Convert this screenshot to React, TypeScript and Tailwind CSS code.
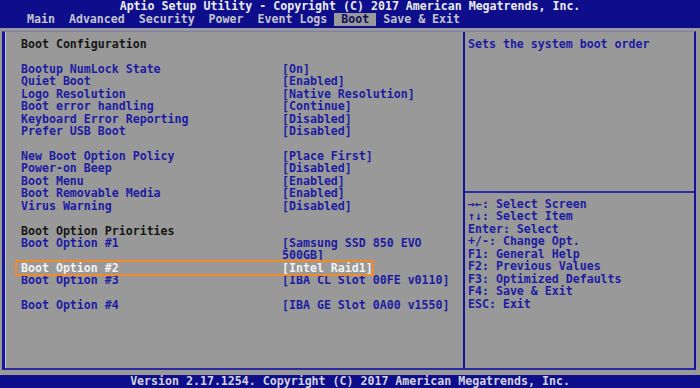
import React from "react";

type Row = {
  label?: string;
  value?: string | string[];
  head?: boolean;
  active?: boolean;
};

const rows: Row[] = [
  { label: "Boot Configuration", head: true },
  {},
  { label: "Bootup NumLock State", value: "[On]" },
  { label: "Quiet Boot", value: "[Enabled]" },
  { label: "Logo Resolution", value: "[Native Resolution]" },
  { label: "Boot error handling", value: "[Continue]" },
  { label: "Keyboard Error Reporting", value: "[Disabled]" },
  { label: "Prefer USB Boot", value: "[Disabled]" },
  {},
  { label: "New Boot Option Policy", value: "[Place First]" },
  { label: "Power-on Beep", value: "[Disabled]" },
  { label: "Boot Menu", value: "[Enabled]" },
  { label: "Boot Removable Media", value: "[Enabled]" },
  { label: "Virus Warning", value: "[Disabled]" },
  {},
  { label: "Boot Option Priorities", head: true },
  { label: "Boot Option #1", value: ["[Samsung SSD 850 EVO", "500GB]"] },
  { label: "Boot Option #2", value: "[Intel Raid1]", active: true },
  { label: "Boot Option #3", value: "[IBA CL Slot 00FE v0110]" },
  {},
  { label: "Boot Option #4", value: "[IBA GE Slot 0A00 v1550]" },
];

const tabs = ["Main", "Advanced", "Security", "Power", "Event Logs", "Boot", "Save & Exit"];

const keys = [
  "\u2192\u2190: Select Screen",
  "\u2191\u2193: Select Item",
  "Enter: Select",
  "+/-: Change Opt.",
  "F1: General Help",
  "F2: Previous Values",
  "F3: Optimized Defaults",
  "F4: Save & Exit",
  "ESC: Exit",
];

function SettingRow({ row }: { row: Row }) {
  if (!row.label) return <div className="h-[12.45px]" />;
  if (row.head) {
    return <div className="h-[12.45px] whitespace-pre text-[#161616]">{row.label}</div>;
  }
  const lines = Array.isArray(row.value) ? row.value : [row.value];
  if (row.active) {
    return (
      <div className="-ml-1 flex h-[12.45px] w-[355px] whitespace-pre pl-1 text-[#f2f2f2] outline-2 outline-[#f28a2c]">
        <span className="w-[261px] shrink-0">{row.label}</span>
        <span>{lines[0]}</span>
      </div>
    );
  }
  return (
    <div className="flex whitespace-pre text-[#1c1ca2]">
      <span className="h-[12.45px] w-[261px] shrink-0">{row.label}</span>
      <div className="flex flex-col">
        {lines.map((l) => (
          <span key={l} className="h-[12.45px]">
            {l}
          </span>
        ))}
      </div>
    </div>
  );
}

export default function App() {
  return (
    <div className="flex h-[388px] w-[700px] flex-col overflow-hidden bg-[#999999] font-['DejaVu_Sans_Mono',monospace] text-[11.6px] font-bold leading-[12.45px]">
      {/* Header */}
      <div className="h-[28px] shrink-0 bg-[#0e0e8c]">
        <div className="flex h-[13px] items-center justify-center whitespace-pre text-[#ececec]">
          Aptio Setup Utility - Copyright (C) 2017 American Megatrends, Inc.
        </div>
        <div className="flex h-[13px] pl-[20px]">
          {tabs.map((t) =>
            t === "Boot" ? (
              <span key={t} className="flex items-center whitespace-pre bg-[#999999] px-[7px] text-[#10105a]">
                {t}
              </span>
            ) : (
              <span key={t} className="flex items-center whitespace-pre px-[7px] text-[#c4c4cc]">
                {t}
              </span>
            )
          )}
        </div>
      </div>

      {/* Main */}
      <div className="flex-1 pb-[5px] pl-[2px] pr-[4px] pt-[3px]">
        <div className="flex h-full border-b-2 border-l-[3px] border-r-2 border-t border-b-[#2a2aa0] border-l-[#14149a] border-r-[#14149a] border-t-[#7c7cb4] shadow-[inset_1px_0_0_#c4c4d0]">
          <div className="w-[460px] shrink-0 border-r-2 border-r-[#14149a] pl-[16px] pt-[6px]">
            {rows.map((r, i) => (
              <SettingRow key={i} row={r} />
            ))}
          </div>
          <div className="flex flex-1 flex-col">
            <div className="h-[161px] whitespace-pre border-b-2 border-b-[#2a2aa0] pl-[3px] pt-[6px] text-[#1c1ca2]">
              Sets the system boot order
            </div>
            <div className="pl-[3px] pt-[5px] text-[#1c1ca2]">
              {keys.map((k) => (
                <div key={k} className="h-[12.45px] whitespace-pre">
                  {k}
                </div>
              ))}
            </div>
          </div>
        </div>
      </div>

      {/* Footer */}
      <div className="flex h-[13px] shrink-0 items-center justify-center whitespace-pre bg-[#0e0e8c] text-[#d4d4dc]">
        Version 2.17.1254. Copyright (C) 2017 American Megatrends, Inc.
      </div>
    </div>
  );
}
